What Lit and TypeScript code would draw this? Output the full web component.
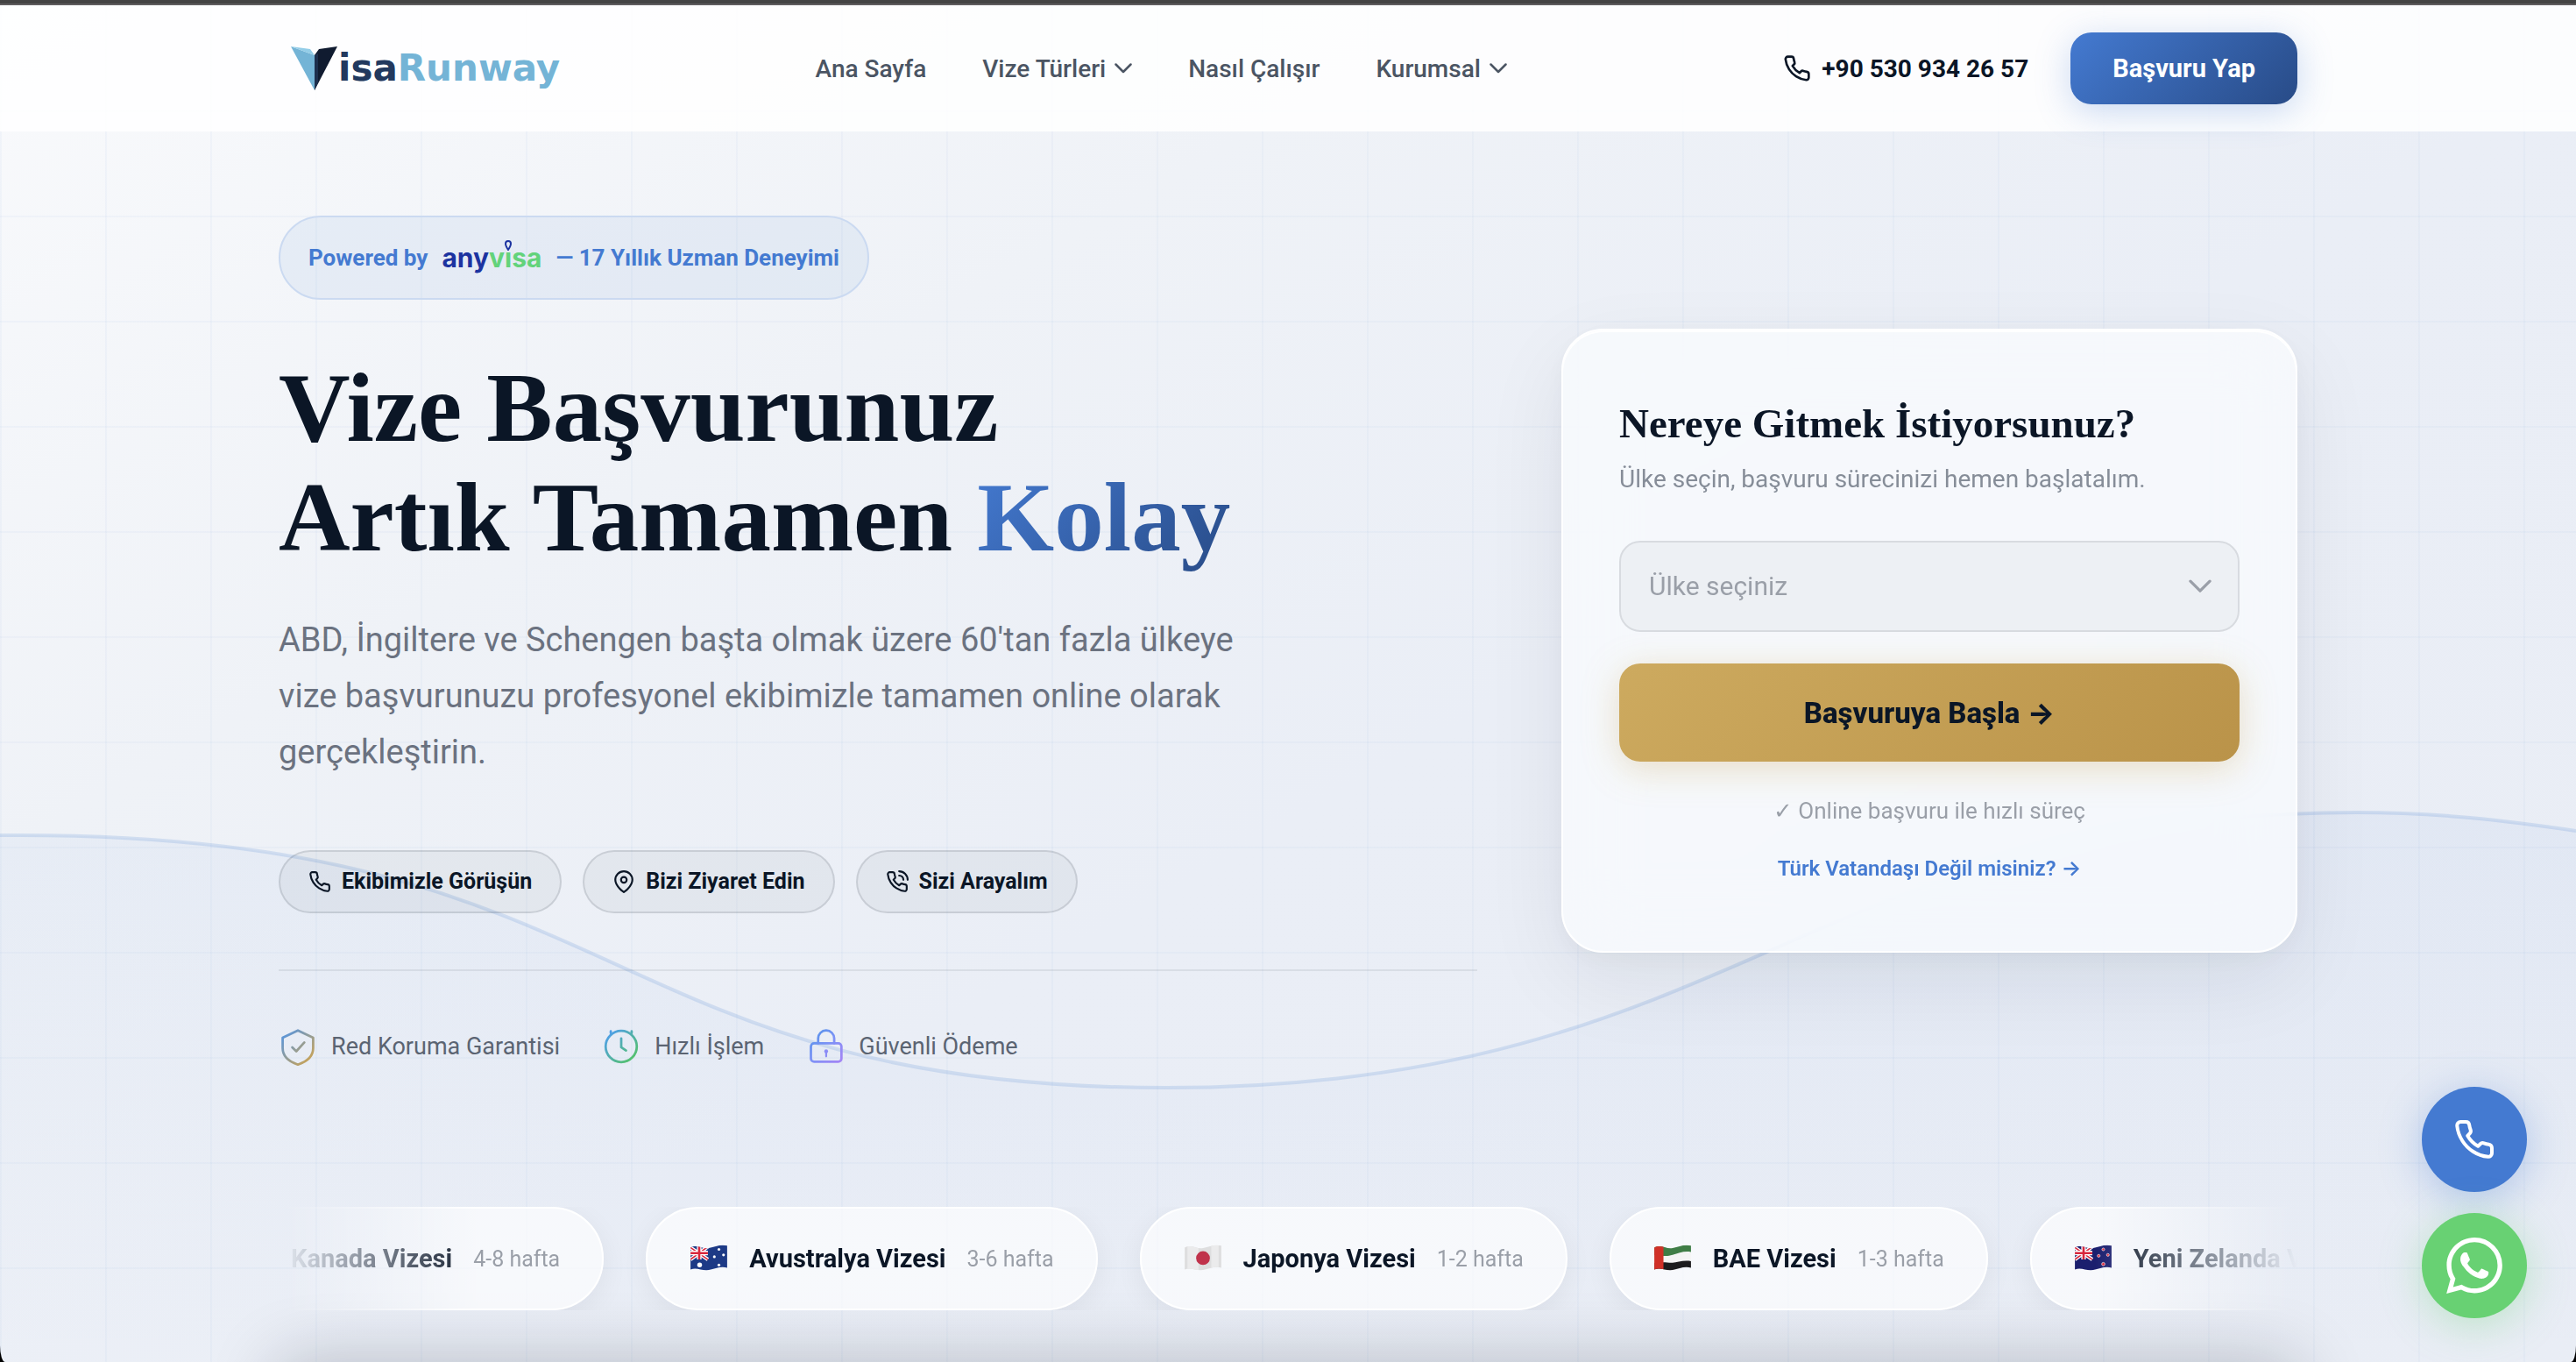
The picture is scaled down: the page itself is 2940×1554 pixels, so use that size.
import { LitElement, html, css, svg } from "lit";
import { customElement } from "lit/decorators.js";

const PHONE = "M22 16.92v3a2 2 0 0 1-2.18 2 19.79 19.79 0 0 1-8.63-3.07 19.5 19.5 0 0 1-6-6A19.79 19.79 0 0 1 2.12 4.18 2 2 0 0 1 4.11 2h3a2 2 0 0 1 2 1.72c.127.96.361 1.903.7 2.81a2 2 0 0 1-.45 2.11L8.09 9.91a16 16 0 0 0 6 6l1.27-1.27a2 2 0 0 1 2.11-.45c.907.339 1.85.573 2.81.7A2 2 0 0 1 22 16.92z";

const phoneIcon = (cls: string, waves = false) => html`
  <svg class=${cls} viewBox="0 0 24 24" fill="none" stroke="currentColor" stroke-width="2"
    stroke-linecap="round" stroke-linejoin="round" aria-hidden="true">
    <path d=${PHONE}></path>
    ${waves ? svg`<path d="M14 1a9 9 0 0 1 9 9"></path><path d="M14 5.500a4.500 4.500 0 0 1 4.500 4.500"></path>` : ""}
  </svg>`;

const chevron = (cls: string) => html`
  <svg class=${cls} viewBox="0 0 20 12" fill="none" stroke="currentColor" stroke-width="2.500"
    stroke-linecap="round" stroke-linejoin="round" aria-hidden="true"><path d="M1.500 1.500l8.500 8.500 8.500-8.500"></path></svg>`;

const CLOTH = "M1 3C8 -1 14 5 21 3.500C28 2 34 -1 41 1V25C34 23 28 26 21 27.500C14 29 8 24 1 27Z";

const unionJack = svg`
  <path d="M1 3L20 16M20 2L1 16" stroke="#fff" stroke-width="4"></path>
  <path d="M1 3L20 16M20 2L1 16" stroke="#d8263c" stroke-width="1.500"></path>
  <path d="M10.500 0V16M1 9H20" stroke="#fff" stroke-width="5"></path>
  <path d="M10.500 0V16M1 9H20" stroke="#d8263c" stroke-width="2.500"></path>`;

const flagArt: Record<string, unknown> = {
  ca: svg`<path d="M0 0H42V30H0Z" fill="#fff"></path><path d="M0 0H11V30H0ZM31 0H42V30H31Z" fill="#d8263c"></path>
    <path d="M21 7l6 8-6 6-6-6Z" fill="#d8263c"></path>`,
  au: svg`<path d="M0 0H42V30H0Z" fill="#1d3a86"></path>${unionJack}
    <g fill="#fff"><circle cx="11" cy="22" r="2.600"></circle><circle cx="32" cy="5" r="1.500"></circle><circle cx="27" cy="13" r="1.500"></circle>
    <circle cx="37" cy="11" r="1.500"></circle><circle cx="32" cy="22" r="1.500"></circle></g>`,
  jp: svg`<path d="M0 0H42V30H0Z" fill="#dededf"></path><path d="M4 0H16V30H4ZM30 0H38V30H30Z" fill="#ebebec"></path><circle cx="21" cy="14.500" r="7.500" fill="#c0324b"></circle>`,
  ae: svg`<path d="M0 0H42V30H0Z" fill="#f4f4f4"></path><path d="M0 0H42V8C34 6 28 9 21 11S12 12 0 11Z" fill="#3f7d46"></path>
    <path d="M0 20C12 18 16 20 21 19.500S34 16 42 18V30H0Z" fill="#1c1c1e"></path><path d="M0 0H11V30H0Z" fill="#d03027"></path>`,
  nz: svg`<path d="M0 0H42V30H0Z" fill="#1b1f6e"></path>${unionJack}
    <g fill="#d8263c" stroke="#fff" stroke-width=".6"><circle cx="32" cy="5" r="1.500"></circle><circle cx="27" cy="12" r="1.500"></circle>
    <circle cx="37" cy="11" r="1.500"></circle><circle cx="32" cy="21" r="1.800"></circle></g>`,
};

const VISAS = [
  { flag: "ca", name: "Kanada Vizesi", time: "4-8 hafta" },
  { flag: "au", name: "Avustralya Vizesi", time: "3-6 hafta" },
  { flag: "jp", name: "Japonya Vizesi", time: "1-2 hafta" },
  { flag: "ae", name: "BAE Vizesi", time: "1-3 hafta" },
  { flag: "nz", name: "Yeni Zelanda Vizesi", time: "" },
];

@customElement("site-header")
export class SiteHeader extends LitElement {
  static styles = css`
    :host { display: block; background: rgba(255, 255, 255, 0.86); color: #4b5563; }
    .bar { box-sizing: border-box; max-width: 2400px; min-height: 144px; margin: 0 auto; padding: 0 48px;
      display: flex; align-items: center; justify-content: space-between; }
    a { color: inherit; text-decoration: none; }
    .logo { display: flex; align-items: center; padding-left: 14px; font: 700 42px/60px "DejaVu Sans", sans-serif; color: #22395e; }
    .mark { width: 54px; height: 52px; }
    .accent { color: #74b4d6; }
    nav { display: flex; align-items: center; gap: 64px; padding-right: 24px; font-size: 28px; font-weight: 500; }
    .item { display: flex; align-items: center; gap: 10px; padding: 0; border: 0; background: none; font: inherit; color: inherit; }
    .chev { width: 20px; height: 12px; }
    .side { display: flex; align-items: center; gap: 48px; }
    .tel { display: flex; align-items: center; gap: 12px; font-size: 28px; font-weight: 700; color: #0b1626; }
    .tel-icon { width: 32px; height: 32px; }
    .cta { padding: 0 48px; height: 82px; border: 0; border-radius: 24px; font: 700 29px/36px Roboto, sans-serif; color: #fff;
      background: linear-gradient(135deg, #447ad1, #284b87); box-shadow: 0 8px 40px rgba(68, 122, 209, 0.28); }
  `;
  render() {
    return html`<header class="bar">
      <a class="logo" href="#" aria-label="VisaRunway">
        <svg class="mark" viewBox="0 0 54 52" aria-hidden="true">
          <path d="M0 1L27 11V51Z" fill="#74b4d6"></path><path d="M0 1L22 4L27 11Z" fill="#93cde8"></path>
          <path d="M27 11L32 4L53 1L27 51Z" fill="#101b30"></path><path d="M27 11L31 9V42L27 51Z" fill="#1d2f4d"></path>
        </svg>
        <span>isa</span><span class="accent">Runway</span>
      </a>
      <nav>
        <a href="#">Ana Sayfa</a>
        <button class="item">Vize Türleri ${chevron("chev")}</button>
        <a href="#">Nasıl Çalışır</a>
        <button class="item">Kurumsal ${chevron("chev")}</button>
      </nav>
      <div class="side">
        <a class="tel" href="tel:+905309342657">${phoneIcon("tel-icon")}<span>+90 530 934 26 57</span></a>
        <button class="cta">Başvuru Yap</button>
      </div>
    </header>`;
  }
}

@customElement("hero-intro")
export class HeroIntro extends LitElement {
  static styles = css`
    :host { display: block; }
    .badge { display: inline-flex; align-items: center; gap: 16px; box-sizing: border-box; height: 96px; padding: 0 32px;
      border: 2px solid #cbdaf1; border-radius: 48px; background: rgba(68, 122, 209, 0.08);
      font-size: 26px; font-weight: 700; color: #447ad1; }
    .any { display: flex; font: 700 30px/40px Inter, sans-serif; color: #1c33a0; }
    .green { color: #63d37b; }
    .pin { position: relative; }
    .pin svg { position: absolute; left: 50%; bottom: 28px; width: 8px; height: 12px; margin-left: -4px; }
    h1 { margin: 60px 0 0; font: 700 113px/125px "Liberation Serif", serif; color: #0b1626; }
    .grad { background: linear-gradient(135deg, #447ad1, #284b87); -webkit-background-clip: text; background-clip: text; color: transparent; }
    .lead { max-width: 1120px; margin: 46px 0 0; font-size: 38px; line-height: 64px; color: #6b7280; }
    .actions { display: flex; gap: 24px; margin-top: 80px; }
    .chip { display: flex; align-items: center; gap: 12px; box-sizing: border-box; height: 72px; padding: 0 32px; border: 2px solid rgba(11, 22, 38, 0.12);
      border-radius: 36px; background: rgba(11, 22, 38, 0.04); font: 700 25px/32px Roboto, sans-serif; color: #0b1626; }
    .chip-icon { width: 26px; height: 26px; }
    .trust { display: flex; gap: 48px; margin: 64px 0 0; padding: 64px 0 0; border-top: 2px solid rgba(11, 22, 38, 0.08); list-style: none;
      font-size: 27px; color: #5b6472; }
    .trust li { display: flex; align-items: center; gap: 16px; }
    .trust svg { width: 44px; height: 44px; }
  `;
  render() {
    return html`
      <div class="badge"><span>Powered by</span>
        <span class="any"><span>any</span><span class="green">v</span><span class="green pin">ı<svg viewBox="0 0 8 12" aria-hidden="true"><path d="M4 11C2 8 1 6 1 4a3 3 0 0 1 6 0c0 2-1 4-3 7Z" fill="none" stroke="#1c33a0" stroke-width="2"></path></svg></span><span class="green">sa</span></span>
        <span>— 17 Yıllık Uzman Deneyimi</span></div>
      <h1>Vize Başvurunuz<br />Artık Tamamen <span class="grad">Kolay</span></h1>
      <p class="lead">ABD, İngiltere ve Schengen başta olmak üzere 60'tan fazla ülkeye vize başvurunuzu profesyonel ekibimizle tamamen online olarak gerçekleştirin.</p>
      <div class="actions">
        <button class="chip">${phoneIcon("chip-icon")}Ekibimizle Görüşün</button>
        <button class="chip"><svg class="chip-icon" viewBox="0 0 24 24" fill="none" stroke="currentColor" stroke-width="2" aria-hidden="true">
          <path d="M21 10c0 7-9 13-9 13s-9-6-9-13a9 9 0 0 1 18 0z"></path><circle cx="12" cy="10" r="3"></circle></svg>Bizi Ziyaret Edin</button>
        <button class="chip">${phoneIcon("chip-icon", true)}Sizi Arayalım</button>
      </div>
      <ul class="trust">
        <li><svg viewBox="0 0 24 24" fill="none" stroke="url(#g1)" stroke-width="1.500" stroke-linecap="round" stroke-linejoin="round" aria-hidden="true">
          <defs><linearGradient id="g1" gradientUnits="userSpaceOnUse" x1="2" y1="2" x2="22" y2="22"><stop offset="0" stop-color="#4f94e8"></stop><stop offset="1" stop-color="#d3a44a"></stop></linearGradient></defs>
          <path d="M12 2L21.500 6.500v6.500c0 5-4 8.500-9.500 10.300C6.500 21.500 2.500 18 2.500 13V6.500z"></path><path d="M8.500 12.500l2.500 2.500 5-5.500"></path></svg>Red Koruma Garantisi</li>
        <li><svg viewBox="0 0 24 24" fill="none" stroke="url(#g2)" stroke-width="1.500" stroke-linecap="round" stroke-linejoin="round" aria-hidden="true">
          <defs><linearGradient id="g2" gradientUnits="userSpaceOnUse" x1="4" y1="4" x2="20" y2="20"><stop offset="0" stop-color="#4f9fe8"></stop><stop offset="1" stop-color="#55c26a"></stop></linearGradient></defs>
          <circle cx="12" cy="12" r="9.700"></circle><path d="M12 7v5.500l3 2M5.500 2.500v1.200M18.500 2.500v1.200"></path></svg>Hızlı İşlem</li>
        <li><svg viewBox="0 0 24 24" fill="none" stroke="url(#g3)" stroke-width="1.500" stroke-linecap="round" stroke-linejoin="round" aria-hidden="true">
          <defs><linearGradient id="g3" gradientUnits="userSpaceOnUse" x1="2" y1="2" x2="22" y2="22"><stop offset="0" stop-color="#4f94e8"></stop><stop offset=".5" stop-color="#7d92f6"></stop><stop offset="1" stop-color="#a583f5"></stop></linearGradient></defs>
          <rect x="3" y="10" width="19" height="11.500" rx="2"></rect><path d="M7.500 10V7a5 5 0 0 1 10 0v3"></path>
          <circle cx="12.500" cy="15" r="1.200" fill="#8b8df6" stroke="none"></circle><path d="M12.500 15.500v2.700" stroke="#8b8df6" stroke-width="1.200"></path></svg>Güvenli Ödeme</li>
      </ul>`;
  }
}

@customElement("country-card")
export class CountryCard extends LitElement {
  static styles = css`
    :host { display: block; box-sizing: border-box; padding: 76px 64px 74px; border: 2px solid #fff; border-radius: 48px;
      background: rgba(249, 251, 254, 0.78); backdrop-filter: blur(40px);
      box-shadow: 0 32px 96px rgba(11, 22, 38, 0.07), 0 8px 32px rgba(11, 22, 38, 0.04), inset 0 2px 0 #fff; }
    form { display: flex; flex-direction: column; }
    h2 { margin: 0; font: 700 47px/60px "Liberation Serif", serif; color: #0b1626; }
    .sub { margin: 12px 0 0; font-size: 28px; line-height: 44px; color: #868d98; }
    .field { display: grid; margin-top: 48px; }
    .field > * { grid-area: 1 / 1; }
    select { appearance: none; box-sizing: border-box; width: 100%; height: 104px; padding: 0 32px; border: 2px solid #d8dbe0; border-radius: 24px;
      background: #edf0f4; font: 400 30px/40px Roboto, sans-serif; color: #9a9fa8; }
    .arrow { justify-self: end; align-self: center; width: 26px; height: 16px; margin-right: 32px; color: #9a9fa8; pointer-events: none; }
    .go { height: 112px; margin-top: 36px; border: 0; border-radius: 24px; font: 800 33px/40px Roboto, sans-serif; color: #0b1626;
      background: linear-gradient(135deg, #cdaa5f, #ba9349); box-shadow: 0 8px 40px rgba(205, 170, 95, 0.35); }
    .to { font-family: Inter, sans-serif; }
    .note { margin: 36px 0 0; text-align: center; font-size: 26px; line-height: 40px; color: #9a9fa8; }
    .tick { font-family: "DejaVu Sans", sans-serif; font-weight: 700; }
    .link { align-self: center; margin-top: 26px; font-size: 24px; line-height: 40px; font-weight: 600; color: #447ad1; text-decoration: none; }
  `;
  render() {
    return html`<form>
      <h2>Nereye Gitmek İstiyorsunuz?</h2>
      <p class="sub">Ülke seçin, başvuru sürecinizi hemen başlatalım.</p>
      <div class="field">
        <select aria-label="Ülke seçiniz"><option>Ülke seçiniz</option></select>${chevron("arrow")}
      </div>
      <button class="go" type="button">Başvuruya Başla <span class="to">→</span></button>
      <p class="note"><span class="tick">✓</span> Online başvuru ile hızlı süreç</p>
      <a class="link" href="#">Türk Vatandaşı Değil misiniz? <span class="to">→</span></a>
    </form>`;
  }
}

@customElement("visa-ticker")
export class VisaTicker extends LitElement {
  static styles = css`
    :host { display: block; overflow: hidden; -webkit-mask: linear-gradient(90deg, transparent, #000 10%, #000 90%, transparent);
      mask: linear-gradient(90deg, transparent, #000 10%, #000 90%, transparent); }
    .track { display: flex; gap: 48px; width: max-content; margin: 0; padding: 0; list-style: none; transform: translateX(-104px); }
    .pill { display: flex; align-items: center; gap: 24px; box-sizing: border-box; height: 118px; padding: 0 48px; border: 2px solid #fff; border-radius: 59px;
      background: rgba(255, 255, 255, 0.65); box-shadow: 0 8px 32px rgba(11, 22, 38, 0.06); white-space: nowrap; }
    .flag { width: 44px; height: 32px; }
    .name { font-size: 29px; font-weight: 700; color: #0b1626; }
    .time { font-size: 25px; color: #9a9fa8; }
  `;
  render() {
    return html`<ul class="track">${VISAS.map((v) => html`<li class="pill">
      <svg class="flag" viewBox="0 0 42 30" aria-hidden="true">
        <defs><clipPath id="c-${v.flag}"><path d=${CLOTH}></path></clipPath></defs>
        <g clip-path="url(#c-${v.flag})">${flagArt[v.flag]}</g>
      </svg><span class="name">${v.name}</span>${v.time ? html`<span class="time">${v.time}</span>` : ""}</li>`)}</ul>`;
  }
}

@customElement("app-root")
export class AppRoot extends LitElement {
  static styles = css`
    :host { display: block; min-height: 100vh; background: #000; font-family: Roboto, "Noto Sans", sans-serif; }
    .window { position: relative; display: flex; flex-direction: column; height: 100vh; overflow: hidden; isolation: isolate;
      border-bottom-left-radius: 6px 19px; border-bottom-right-radius: 6px 19px;
      background: linear-gradient(150deg, #f9fafc 0%, #eff2f7 30%, #eaeef6 55%, #e9edf5 100%); }
    .chrome { flex: none; height: 4px; background: #444; border-bottom: 2px solid #5f5d5f; }
    .backdrop { position: absolute; inset: 6px 0 0; z-index: -1;
      background: linear-gradient(rgba(68, 122, 209, 0.04) 2px, transparent 2px) 0 0 / 120px 120px,
        linear-gradient(90deg, rgba(68, 122, 209, 0.04) 2px, transparent 2px) 0 0 / 120px 120px; }
    .wave { width: 100%; height: 100%; display: block; }
    .hero { box-sizing: border-box; width: 100%; max-width: 2400px; margin: 0 auto; padding: 96px 48px 0; }
    .columns { display: grid; grid-template-columns: minmax(0, 1fr) 840px; gap: 96px; align-items: center; }
    .ticker { margin-top: 161px; }
    .next { flex: none; align-self: center; width: calc(100% - 636px); height: 200px; margin-top: 60px; background: #0b1626;
      box-shadow: 0 0 80px rgba(11, 22, 38, 0.24); }
    .fabs { position: absolute; right: 56px; bottom: 50px; display: flex; flex-direction: column; gap: 24px; }
    .fab { display: flex; align-items: center; justify-content: center; width: 120px; height: 120px; border-radius: 50%; color: #fff; }
    .call { background: #447ad1; box-shadow: 0 8px 48px rgba(68, 122, 209, 0.35); }
    .whats { background: #68d173; box-shadow: 0 8px 48px rgba(104, 209, 115, 0.35); }
    .fab-icon { width: 48px; height: 48px; }
    .wa-icon { width: 64px; height: 64px; }
  `;
  render() {
    return html`<div class="window">
      <div class="backdrop"><svg class="wave" viewBox="0 0 2940 1548" preserveAspectRatio="none" aria-hidden="true">
        <defs><linearGradient id="sea" x1="0" y1="0" x2="0" y2="1"><stop offset="0" stop-color="#447ad1" stop-opacity=".05"></stop><stop offset="1" stop-color="#447ad1" stop-opacity="0"></stop></linearGradient></defs>
        <path d="M0 947C721 940 675 1235 1331 1235C1987 1235 2063 921 2690 921C2780 921 2860 930 2940 942V1548H0Z" fill="url(#sea)"></path>
        <path d="M0 947C721 940 675 1235 1331 1235C1987 1235 2063 921 2690 921C2780 921 2860 930 2940 942" fill="none" stroke="rgba(68,122,209,.17)" stroke-width="4"></path>
      </svg></div>
      <div class="chrome"></div>
      <site-header></site-header>
      <main class="hero">
        <div class="columns"><hero-intro></hero-intro><country-card></country-card></div>
        <visa-ticker class="ticker"></visa-ticker>
      </main>
      <div class="next"></div>
      <div class="fabs">
        <a class="fab call" href="tel:+905309342657" aria-label="Telefon">${phoneIcon("fab-icon")}</a>
        <a class="fab whats" href="#" aria-label="WhatsApp"><svg class="wa-icon" viewBox="0 0 24 24" fill="currentColor" aria-hidden="true">
          <path d="M17.472 14.382c-.297-.149-1.758-.867-2.030-.967-.273-.099-.471-.148-.670.150-.197.297-.767.966-.940 1.164-.173.199-.347.223-.644.075-.297-.150-1.255-.463-2.390-1.475-.883-.788-1.480-1.761-1.653-2.059-.173-.297-.018-.458.130-.606.134-.133.298-.347.446-.520.149-.174.198-.298.298-.497.099-.198.050-.371-.025-.520-.075-.149-.669-1.612-.916-2.207-.242-.579-.487-.500-.669-.510-.173-.008-.371-.010-.570-.010-.198 0-.520.074-.792.372-.272.297-1.040 1.016-1.040 2.479 0 1.462 1.065 2.875 1.213 3.074.149.198 2.096 3.200 5.077 4.487.709.306 1.262.489 1.694.625.712.227 1.360.195 1.871.118.571-.085 1.758-.719 2.006-1.413.248-.694.248-1.289.173-1.413-.074-.124-.272-.198-.570-.347m-5.421 7.403h-.004a9.870 9.870 0 0 1-5.031-1.378l-.361-.214-3.741.982.998-3.648-.235-.374a9.860 9.860 0 0 1-1.510-5.260c.001-5.450 4.436-9.884 9.888-9.884 2.640 0 5.122 1.030 6.988 2.898a9.825 9.825 0 0 1 2.893 6.994c-.003 5.450-4.437 9.884-9.885 9.884m8.413-18.297A11.815 11.815 0 0 0 12.050 0C5.495 0 .160 5.335.157 11.892c0 2.096.547 4.142 1.588 5.945L.057 24l6.305-1.654a11.882 11.882 0 0 0 5.683 1.448h.005c6.554 0 11.890-5.335 11.893-11.893a11.821 11.821 0 0 0-3.480-8.413Z"></path></svg></a>
      </div>
    </div>`;
  }
}
